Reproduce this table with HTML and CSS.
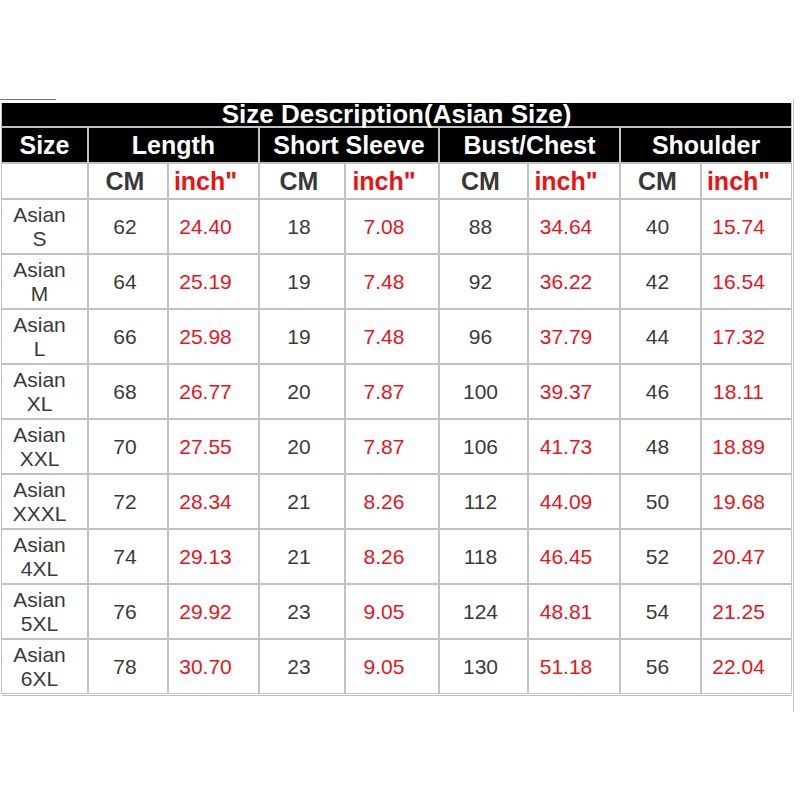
FILE: index.html
```html
<!DOCTYPE html>
<html>
<head>
<meta charset="utf-8">
<title>Size Description</title>
<link rel="stylesheet" href="styles.css">
</head>
<body>
<div class="frame">
  <div class="tick"></div>
  <table class="chart">
    <colgroup>
      <col class="w-size"><col class="w-a"><col class="w-b"><col class="w-c"><col class="w-d"><col class="w-e"><col class="w-f"><col class="w-g"><col class="w-h">
    </colgroup>
    <tr><td colspan="9" class="title">Size Description(Asian Size)</td></tr>
    <tr class="head">
      <td>Size</td><td colspan="2">Length</td><td colspan="2">Short Sleeve</td><td colspan="2">Bust/Chest</td><td colspan="2">Shoulder</td>
    </tr>
    <tr class="units">
      <td></td>
      <td class="cm">CM</td><td class="in">inch"</td>
      <td class="cm">CM</td><td class="in">inch"</td>
      <td class="cm">CM</td><td class="in">inch"</td>
      <td class="cm">CM</td><td class="in">inch"</td>
    </tr>
    <tr class="row"><td class="sz">Asian<br>S</td><td class="cm">62</td><td class="in">24.40</td><td class="cm">18</td><td class="in">7.08</td><td class="cm">88</td><td class="in">34.64</td><td class="cm">40</td><td class="in">15.74</td></tr>
    <tr class="row"><td class="sz">Asian<br>M</td><td class="cm">64</td><td class="in">25.19</td><td class="cm">19</td><td class="in">7.48</td><td class="cm">92</td><td class="in">36.22</td><td class="cm">42</td><td class="in">16.54</td></tr>
    <tr class="row"><td class="sz">Asian<br>L</td><td class="cm">66</td><td class="in">25.98</td><td class="cm">19</td><td class="in">7.48</td><td class="cm">96</td><td class="in">37.79</td><td class="cm">44</td><td class="in">17.32</td></tr>
    <tr class="row"><td class="sz">Asian<br>XL</td><td class="cm">68</td><td class="in">26.77</td><td class="cm">20</td><td class="in">7.87</td><td class="cm">100</td><td class="in">39.37</td><td class="cm">46</td><td class="in">18.11</td></tr>
    <tr class="row"><td class="sz">Asian<br>XXL</td><td class="cm">70</td><td class="in">27.55</td><td class="cm">20</td><td class="in">7.87</td><td class="cm">106</td><td class="in">41.73</td><td class="cm">48</td><td class="in">18.89</td></tr>
    <tr class="row"><td class="sz">Asian<br>XXXL</td><td class="cm">72</td><td class="in">28.34</td><td class="cm">21</td><td class="in">8.26</td><td class="cm">112</td><td class="in">44.09</td><td class="cm">50</td><td class="in">19.68</td></tr>
    <tr class="row"><td class="sz">Asian<br>4XL</td><td class="cm">74</td><td class="in">29.13</td><td class="cm">21</td><td class="in">8.26</td><td class="cm">118</td><td class="in">46.45</td><td class="cm">52</td><td class="in">20.47</td></tr>
    <tr class="row"><td class="sz">Asian<br>5XL</td><td class="cm">76</td><td class="in">29.92</td><td class="cm">23</td><td class="in">9.05</td><td class="cm">124</td><td class="in">48.81</td><td class="cm">54</td><td class="in">21.25</td></tr>
    <tr class="row"><td class="sz">Asian<br>6XL</td><td class="cm">78</td><td class="in">30.70</td><td class="cm">23</td><td class="in">9.05</td><td class="cm">130</td><td class="in">51.18</td><td class="cm">56</td><td class="in">22.04</td></tr>
  </table>
  <div class="rule"></div>
</div>
</body>
</html>
```

FILE: styles.css
```css
html, body {
  margin: 0;
  padding: 0;
  background: #ffffff;
}

body {
  font-family: "Liberation Sans", Arial, sans-serif;
  color: #333333;
}

.frame {
  margin-top: 99px;
  width: 793px;
  padding-bottom: 16px;
  border-right: 1px solid #c4c4c4;
}

.tick {
  width: 56px;
  height: 1px;
  margin-top: 2px;
  background: #777777;
}

.chart {
  margin-top: 3px;
  margin-left: 1px;
  width: 791px;
  table-layout: fixed;
  border-collapse: separate;
  border-spacing: 0;
}

.w-size { width: 87px; }
.w-a { width: 80px; }
.w-b { width: 91px; }
.w-c { width: 86px; }
.w-d { width: 94px; }
.w-e { width: 89px; }
.w-f { width: 92px; }
.w-g { width: 81px; }
.w-h { width: 91px; }

.chart td {
  padding: 0;
  border: 1px solid #c2c2c2;
  text-align: center;
  vertical-align: middle;
  overflow: hidden;
  white-space: nowrap;
}

.chart td.title {
  border-top: none;
  height: 22px;
  padding-bottom: 1px;
  background: #000000;
  color: #ffffff;
  font-weight: bold;
  font-size: 26px;
  line-height: 22px;
  overflow: visible;
}

.head td {
  height: 34px;
  background: #000000;
  color: #ffffff;
  font-weight: bold;
  font-size: 25px;
  line-height: 30px;
}

.units td {
  height: 34px;
  font-weight: bold;
  font-size: 25px;
  line-height: 30px;
}

.units td.cm {
  color: #383838;
}

.units td.in {
  color: #ee1111;
}

.row td {
  height: 53px;
  font-size: 21px;
  line-height: 24px;
  color: #3a3a3a;
}

.row td.in {
  color: #e8141b;
}

.chart td.in {
  padding-right: 16px;
}

.chart td.cm {
  padding-right: 6px;
}

.chart td.sz {
  padding-right: 10px;
}

.rule {
  width: 790px;
  height: 1px;
  margin-top: 1px;
  margin-left: 2px;
  background: #bdbdbd;
}
```
